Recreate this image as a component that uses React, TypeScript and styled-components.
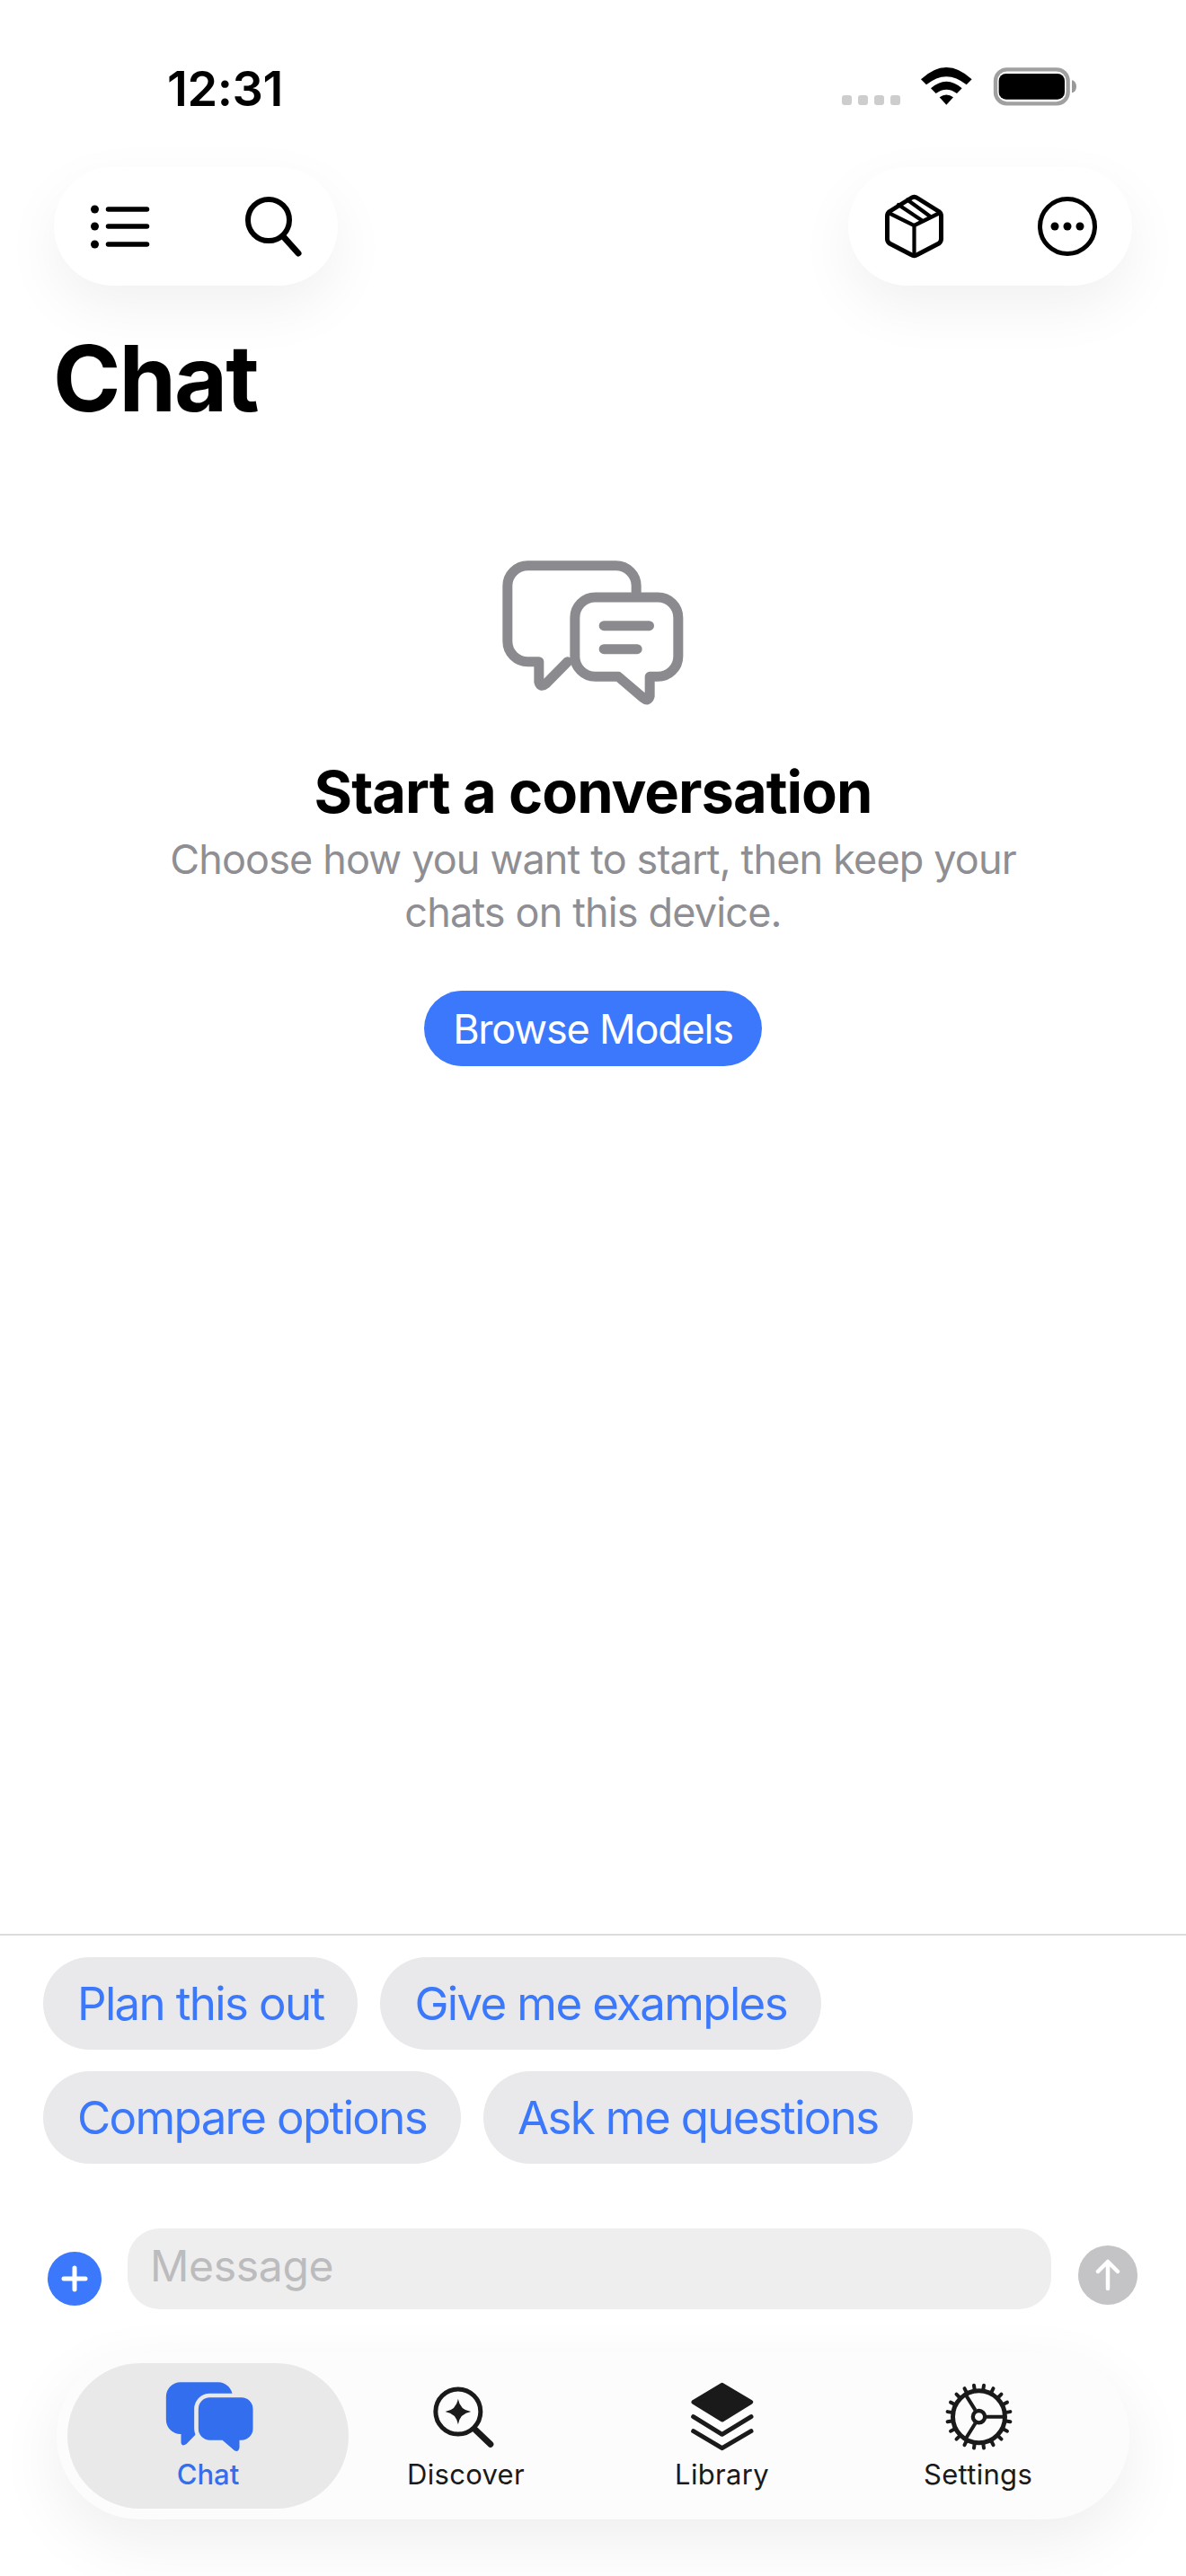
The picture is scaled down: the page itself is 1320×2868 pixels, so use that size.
import React from "react";
import styled, { createGlobalStyle } from "styled-components";

const Global = createGlobalStyle`
  html, body { margin: 0; padding: 0; background: #fff; }
  * { box-sizing: border-box; }
  body { font-family: Inter, "Liberation Sans", sans-serif; -webkit-font-smoothing: antialiased; }
`;

const Screen = styled.div`
  width: 1320px; height: 2868px; display: flex; flex-direction: column;
  overflow: hidden; background: #fff;
`;
const StatusBar = styled.div`
  height: 186px; padding: 75px 122px 0 186px; display: flex;
  justify-content: space-between; align-items: flex-start;
`;
const Time = styled.div`
  font-size: 54px; line-height: 47px; font-weight: 600; color: #000; letter-spacing: -0.4px;
`;
const TopBar = styled.div`
  display: flex; justify-content: space-between; padding: 0 60px;
`;
const ToolPill = styled.div`
  width: 316px; height: 132px; border-radius: 66px; background: #fff;
  box-shadow: 0 24px 64px rgba(0,0,0,0.06);
  display: flex; align-items: center; justify-content: space-between; padding: 0 39px 0 41px;
`;
const Title = styled.h1`
  margin: 48px 0 0 59px; font-size: 102px; line-height: 110px; font-weight: 700; color: #000; letter-spacing: -2px;
`;
const Empty = styled.div`
  display: flex; flex-direction: column; align-items: center; margin-top: 148px;
`;
const EmptyIcon = styled.svg`
  width: 202px; height: 161px; margin-bottom: 57px;
`;
const EmptyTitle = styled.h2`
  margin: 0; font-size: 65px; line-height: 80px; font-weight: 700; color: #000; letter-spacing: -1px;
`;
const EmptyText = styled.p`
  margin: 5px 0 0; width: 1000px; text-align: center; font-size: 45px; line-height: 59px; font-weight: 400;
  color: #8e8e93; letter-spacing: -0.85px;
`;
const PrimaryButton = styled.button`
  margin-top: 58px; height: 84px; padding: 0 32px; border: 0; border-radius: 42px;
  background: #3c78fb; color: #fff; font: 400 45px Inter, sans-serif; letter-spacing: -1.2px;
`;
const Bottom = styled.div`
  margin-top: auto; display: flex; flex-direction: column;
`;
const Suggestions = styled.div`
  border-top: 2px solid #dcdcde; padding: 24px 48px 0; display: flex; flex-wrap: wrap; gap: 24px 25px;
`;
const Chip = styled.button`
  height: 103px; padding: 0 38px; border: 0; border-radius: 52px; background: #e9e9eb;
  color: #3c78fb; font: 400 51px Inter, sans-serif; letter-spacing: -1.65px;
`;
const Composer = styled.div`
  margin-top: 72px; padding: 0 54px 0 53px; display: flex; align-items: flex-end;
`;
const AddButton = styled.button`
  width: 60px; height: 60px; border: 0; padding: 0; border-radius: 50%; background: #3c78fb;
  margin: 0 29px 4px 0; display: flex; align-items: center; justify-content: center; flex: none;
`;
const MessageBox = styled.div`
  flex: 1; height: 90px; border-radius: 36px; background: #eeeeee; padding: 0 25px;
  font-size: 48px; line-height: 84px; color: #bcbcbe; letter-spacing: -0.3px;
`;
const SendButton = styled.button`
  width: 66px; height: 66px; border: 0; padding: 0; border-radius: 50%; background: #c4c4c6;
  margin: 0 0 5px 30px; display: flex; align-items: center; justify-content: center; flex: none;
`;
const TabBar = styled.nav`
  margin: 48px 63px 63px; height: 186px; border-radius: 93px; background: #fcfcfc; padding: 12px;
  box-shadow: 0 24px 72px rgba(0,0,0,0.07); display: flex;
`;
const Tab = styled.div<{ $active?: boolean }>`
  width: ${(p) => (p.$active ? "313px" : "285px")};
  margin-right: ${(p) => (p.$active ? "-12px" : "0")};
  height: 162px; border-radius: 81px; flex: none;
  background: ${(p) => (p.$active ? "#e9e9e9" : "transparent")};
  color: ${(p) => (p.$active ? "#336eef" : "#1a1a1a")};
  display: flex; flex-direction: column; align-items: center; padding-top: 9px;
`;
const TabIcon = styled.svg<{ $wide?: boolean }>`
  width: ${(p) => (p.$wide ? "120px" : "100px")}; height: 100px; flex: none; color: inherit;
`;
const TabLabel = styled.span`
  margin-top: -3px; font-size: 31px; line-height: 36px; font-weight: 420; letter-spacing: 0.3px;
`;
const ActiveLabel = styled(TabLabel)`
  font-weight: 550; letter-spacing: 0;
`;

const gear = Array.from({ length: 20 }, (_, i) => (i * 18 + 9) * (Math.PI / 180));

export default function App() {
  return (
    <Screen>
      <Global />
      <StatusBar>
        <Time>12:31</Time>
        <svg width="261" height="43" viewBox="0 0 261 43" style={{ overflow: "visible" }}>
          <g fill="#cdcdcd">
            <rect x="0" y="31" width="11" height="11" rx="3" />
            <rect x="18" y="31" width="11" height="11" rx="3" />
            <rect x="36" y="31" width="11" height="11" rx="3" />
            <rect x="54" y="31" width="11" height="11" rx="3" />
          </g>
          <g transform="translate(73 -15) scale(.3333)">
            <path d="M45 85 Q130 5 215 85 L197 103 Q130 48 63 103Z" fill="#000" />
            <path d="M78 115 Q130 70 182 115 L165 132 Q130 106 95 132Z" fill="#000" />
            <path d="M107 145 Q130 128 153 145 L130 170Z" fill="#000" />
            <rect x="294" y="52" width="242" height="114" rx="38" fill="none" stroke="#a0a0a0" strokeWidth="13" />
            <rect x="305" y="66" width="220" height="86" rx="24" fill="#000" />
            <path d="M549 88 a15 21 0 0 1 0 42z" fill="#999" />
          </g>
        </svg>
      </StatusBar>

      <TopBar>
        <ToolPill>
          <svg width="66" height="72" viewBox="0 0 66 72" fill="none" stroke="#000" strokeWidth="5.5" strokeLinecap="round">
            <circle cx="4.5" cy="17" r="4.5" fill="#000" stroke="none" />
            <circle cx="4.5" cy="36" r="4.5" fill="#000" stroke="none" />
            <circle cx="4.5" cy="56" r="4.5" fill="#000" stroke="none" />
            <path d="M19.5 17H62.5M19.5 36H62.5M19.5 56H62.5" />
          </svg>
          <svg width="66" height="72" viewBox="0 0 66 72" fill="none" stroke="#000" strokeWidth="6" strokeLinecap="round">
            <circle cx="28" cy="29" r="23" />
            <path d="M44 47L61 66" strokeWidth="7" />
          </svg>
        </ToolPill>
        <ToolPill>
          <svg width="66" height="72" viewBox="0 0 66 72" fill="none" stroke="#000" strokeWidth="5" strokeLinecap="round" strokeLinejoin="round">
            <path d="M29 4.5Q32.5 2 36 4.5L60 19.5Q62.5 21.5 62.5 24.5V50Q62.5 53 60 55L36 67.5Q32.5 70 29 67.5L5 55Q2.5 53 2.5 50V24.5Q2.5 21.5 5 19.5Z" />
            <path d="M4 21L32.5 35L61 21M32.5 35V68M15 12L42 30M25 6.5L51 25.5" strokeWidth="4.2" />
          </svg>
          <svg width="66" height="72" viewBox="0 0 66 72" fill="none">
            <circle cx="33" cy="36" r="30.5" stroke="#000" strokeWidth="5" />
            <circle cx="19" cy="36" r="4.5" fill="#000" />
            <circle cx="33" cy="36" r="4.5" fill="#000" />
            <circle cx="47" cy="36" r="4.5" fill="#000" />
          </svg>
        </ToolPill>
      </TopBar>

      <Title>Chat</Title>

      <Empty>
        <EmptyIcon viewBox="298 105 605 483" fill="none" stroke="#8b8b8f" strokeWidth="33" strokeLinecap="round" strokeLinejoin="round">
          <path d="M745 212V190A68 68 0 0 0 677 122H383A68 68 0 0 0 315 190V375A68 68 0 0 0 383 443H420V510Q425 532 443 517L516 443" />
          <path d="M610 228H817A68 68 0 0 1 885 296V425A68 68 0 0 1 817 493H790V558Q785 578 768 564L685 493H608A68 68 0 0 1 540 425V296A68 68 0 0 1 608 228Z" />
          <path d="M637 323H788M637 401H748" />
        </EmptyIcon>
        <EmptyTitle>Start a conversation</EmptyTitle>
        <EmptyText>
          Choose how you want to start, then keep your
          <br />
          chats on this device.
        </EmptyText>
        <PrimaryButton>Browse Models</PrimaryButton>
      </Empty>

      <Bottom>
        <Suggestions>
          <Chip>Plan this out</Chip>
          <Chip>Give me examples</Chip>
          <Chip>Compare options</Chip>
          <Chip>Ask me questions</Chip>
        </Suggestions>
        <Composer>
          <AddButton aria-label="Add">
            <svg width="30" height="30" viewBox="0 0 30 30" stroke="#fff" strokeWidth="5" strokeLinecap="round">
              <path d="M15 3V27M3 15H27" />
            </svg>
          </AddButton>
          <MessageBox>Message</MessageBox>
          <SendButton aria-label="Send">
            <svg width="32" height="36" viewBox="0 0 32 36" fill="none" stroke="#fff" strokeWidth="4.5" strokeLinecap="round" strokeLinejoin="round">
              <path d="M16 3V33M5 14L16 3L27 14" />
            </svg>
          </SendButton>
        </Composer>
        <TabBar>
          <Tab $active>
            <TabIcon $wide viewBox="1.5 0 360 300">
              <path d="M88 37H214A48 48 0 0 1 262 85V162A48 48 0 0 1 214 210H140L108 243Q92 254 90 238V210H88A48 48 0 0 1 40 162V85A48 48 0 0 1 88 37Z" fill="#336eef" />
              <path d="M186 88H292A38 38 0 0 1 330 126V192A38 38 0 0 1 292 230H285V255Q282 272 268 265L228 230H186A38 38 0 0 1 148 192V126A38 38 0 0 1 186 88Z" fill="#336eef" stroke="#e9e9e9" strokeWidth="28" paintOrder="stroke" />
            </TabIcon>
            <ActiveLabel>Chat</ActiveLabel>
          </Tab>
          <Tab>
            <TabIcon viewBox="-4.5 0 300 300">
              <circle cx="118" cy="135" r="75" fill="none" stroke="currentColor" strokeWidth="15" />
              <path d="M175 195L226 244" stroke="currentColor" strokeWidth="21" strokeLinecap="round" />
              <path d="M118 92Q124 129 161 135Q124 141 118 178Q112 141 75 135Q112 129 118 92Z" fill="currentColor" />
            </TabIcon>
            <TabLabel>Discover</TabLabel>
          </Tab>
          <Tab>
            <TabIcon viewBox="9 0 300 300">
              <path d="M158 46L254 103L158 162L63 103Z" fill="currentColor" stroke="currentColor" strokeWidth="15" strokeLinejoin="round" />
              <path d="M62 152L158 211L255 152M62 200L158 257L255 200" fill="none" stroke="currentColor" strokeWidth="15" strokeLinecap="round" strokeLinejoin="round" />
            </TabIcon>
            <TabLabel>Library</TabLabel>
          </Tab>
          <Tab>
            <TabIcon viewBox="-4.5 0 300 300">
              <circle cx="147" cy="152" r="87" fill="none" stroke="currentColor" strokeWidth="15" />
              {gear.map((a) => (
                <path
                  key={a}
                  d={`M${147 + 92 * Math.cos(a)} ${152 + 92 * Math.sin(a)}L${147 + 106 * Math.cos(a)} ${152 + 106 * Math.sin(a)}`}
                  stroke="currentColor"
                  strokeWidth="12"
                  strokeLinecap="round"
                />
              ))}
              <circle cx="147" cy="152" r="20" fill="none" stroke="currentColor" strokeWidth="13" />
              <path d="M170 152H232M135 130L105 82M135 174L105 222" stroke="currentColor" strokeWidth="12" />
            </TabIcon>
            <TabLabel>Settings</TabLabel>
          </Tab>
        </TabBar>
      </Bottom>
    </Screen>
  );
}
